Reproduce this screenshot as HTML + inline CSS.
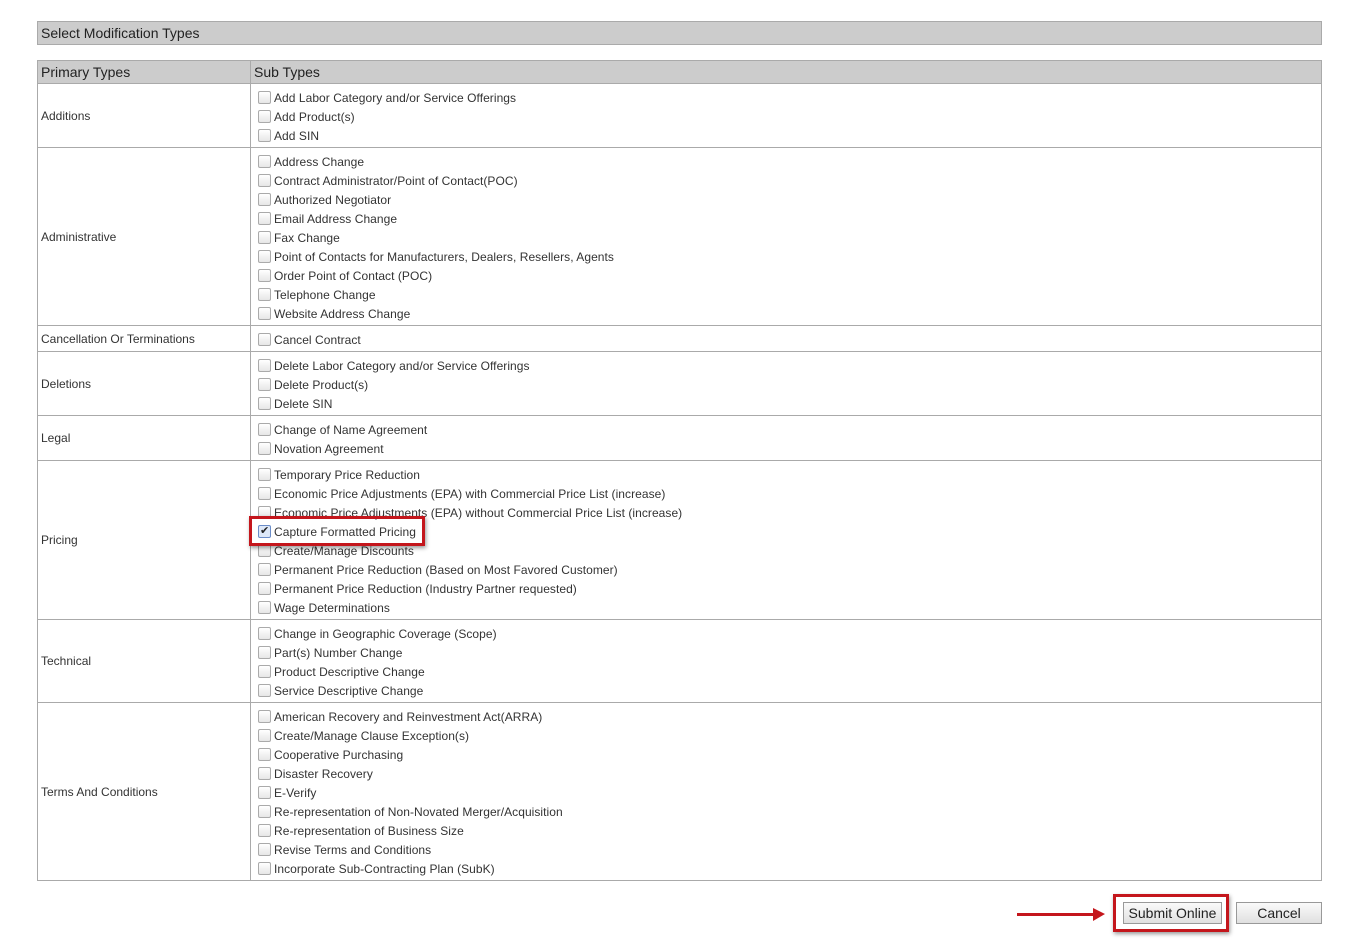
<!DOCTYPE html>
<html><head><meta charset="utf-8"><style>
body{margin:0;background:#fff;font-family:"Liberation Sans",Arial,sans-serif;color:#333;width:1363px;height:947px;position:relative;overflow:hidden}
.hdr{position:absolute;left:37px;top:21px;height:22px;background:#ccc;border:1px solid #aaa;font-size:14px;line-height:22px;padding-left:3px;width:1280px;color:#222}
table{position:absolute;left:37px;top:60px;width:1285px;border-collapse:collapse;font-size:12px}
td,th{border:1px solid #aaa;padding:0;vertical-align:middle;text-align:left}
th{background:#ccc;font-weight:normal;font-size:14px;height:22px;padding-left:3px;color:#222}
td.p{width:209px;padding-left:3px}
td.s{padding:4px 0 2px 7px}
.i{height:19px;line-height:21px;white-space:nowrap;position:relative;letter-spacing:0.05px}
.i:before{content:"";display:inline-block;width:11px;height:11px;border:1px solid #aaa;border-radius:2px;background:linear-gradient(#fff,#e6e6e6);vertical-align:top;margin-top:3px;margin-right:3px}
.chk:before{border-color:#6a8cc8;background:#dde8f8}
.chk:after{content:"✔";position:absolute;left:2px;top:-1px;font-size:11px;color:#222}
.box{position:absolute;border:3px solid #c4161c;box-shadow:1px 2px 4px rgba(0,0,0,.4)}
.btn{position:absolute;height:20px;border:1px solid #999;background:linear-gradient(#fafafa,#e0e0e0);font-size:14px;line-height:20px;text-align:center;color:#222}
</style></head><body>
<div class="hdr">Select Modification Types</div>
<table>
<tr><th style="width:209px">Primary Types</th><th style="padding-left:3px">Sub Types</th></tr>
<tr style="height:63px"><td class="p">Additions</td><td class="s"><div class="i">Add Labor Category and/or Service Offerings</div><div class="i">Add Product(s)</div><div class="i">Add SIN</div></td></tr>
<tr style="height:177px"><td class="p">Administrative</td><td class="s"><div class="i">Address Change</div><div class="i">Contract Administrator/Point of Contact(POC)</div><div class="i">Authorized Negotiator</div><div class="i">Email Address Change</div><div class="i">Fax Change</div><div class="i">Point of Contacts for Manufacturers, Dealers, Resellers, Agents</div><div class="i">Order Point of Contact (POC)</div><div class="i">Telephone Change</div><div class="i">Website Address Change</div></td></tr>
<tr style="height:25px"><td class="p">Cancellation Or Terminations</td><td class="s"><div class="i">Cancel Contract</div></td></tr>
<tr style="height:63px"><td class="p">Deletions</td><td class="s"><div class="i">Delete Labor Category and/or Service Offerings</div><div class="i">Delete Product(s)</div><div class="i">Delete SIN</div></td></tr>
<tr style="height:44px"><td class="p">Legal</td><td class="s"><div class="i">Change of Name Agreement</div><div class="i">Novation Agreement</div></td></tr>
<tr style="height:158px"><td class="p">Pricing</td><td class="s"><div class="i">Temporary Price Reduction</div><div class="i">Economic Price Adjustments (EPA) with Commercial Price List (increase)</div><div class="i">Economic Price Adjustments (EPA) without Commercial Price List (increase)</div><div class="i chk">Capture Formatted Pricing</div><div class="i">Create/Manage Discounts</div><div class="i">Permanent Price Reduction (Based on Most Favored Customer)</div><div class="i">Permanent Price Reduction (Industry Partner requested)</div><div class="i">Wage Determinations</div></td></tr>
<tr style="height:82px"><td class="p">Technical</td><td class="s"><div class="i">Change in Geographic Coverage (Scope)</div><div class="i">Part(s) Number Change</div><div class="i">Product Descriptive Change</div><div class="i">Service Descriptive Change</div></td></tr>
<tr style="height:177px"><td class="p">Terms And Conditions</td><td class="s"><div class="i">American Recovery and Reinvestment Act(ARRA)</div><div class="i">Create/Manage Clause Exception(s)</div><div class="i">Cooperative Purchasing</div><div class="i">Disaster Recovery</div><div class="i">E-Verify</div><div class="i">Re-representation of Non-Novated Merger/Acquisition</div><div class="i">Re-representation of Business Size</div><div class="i">Revise Terms and Conditions</div><div class="i">Incorporate Sub-Contracting Plan (SubK)</div></td></tr>
</table>
<div class="box" style="left:249px;top:516px;width:170px;height:24px"></div>
<div class="btn" style="left:1123px;top:902px;width:97px">Submit Online</div>
<div class="btn" style="left:1236px;top:902px;width:84px">Cancel</div>
<div class="box" style="left:1113px;top:894px;width:110px;height:32px"></div>
<div style="position:absolute;left:1017px;top:913px;width:78px;height:3px;background:#c4161c"></div>
<div style="position:absolute;left:1093px;top:908px;width:0;height:0;border-top:6px solid transparent;border-bottom:7px solid transparent;border-left:12px solid #c4161c"></div>
</body></html>
